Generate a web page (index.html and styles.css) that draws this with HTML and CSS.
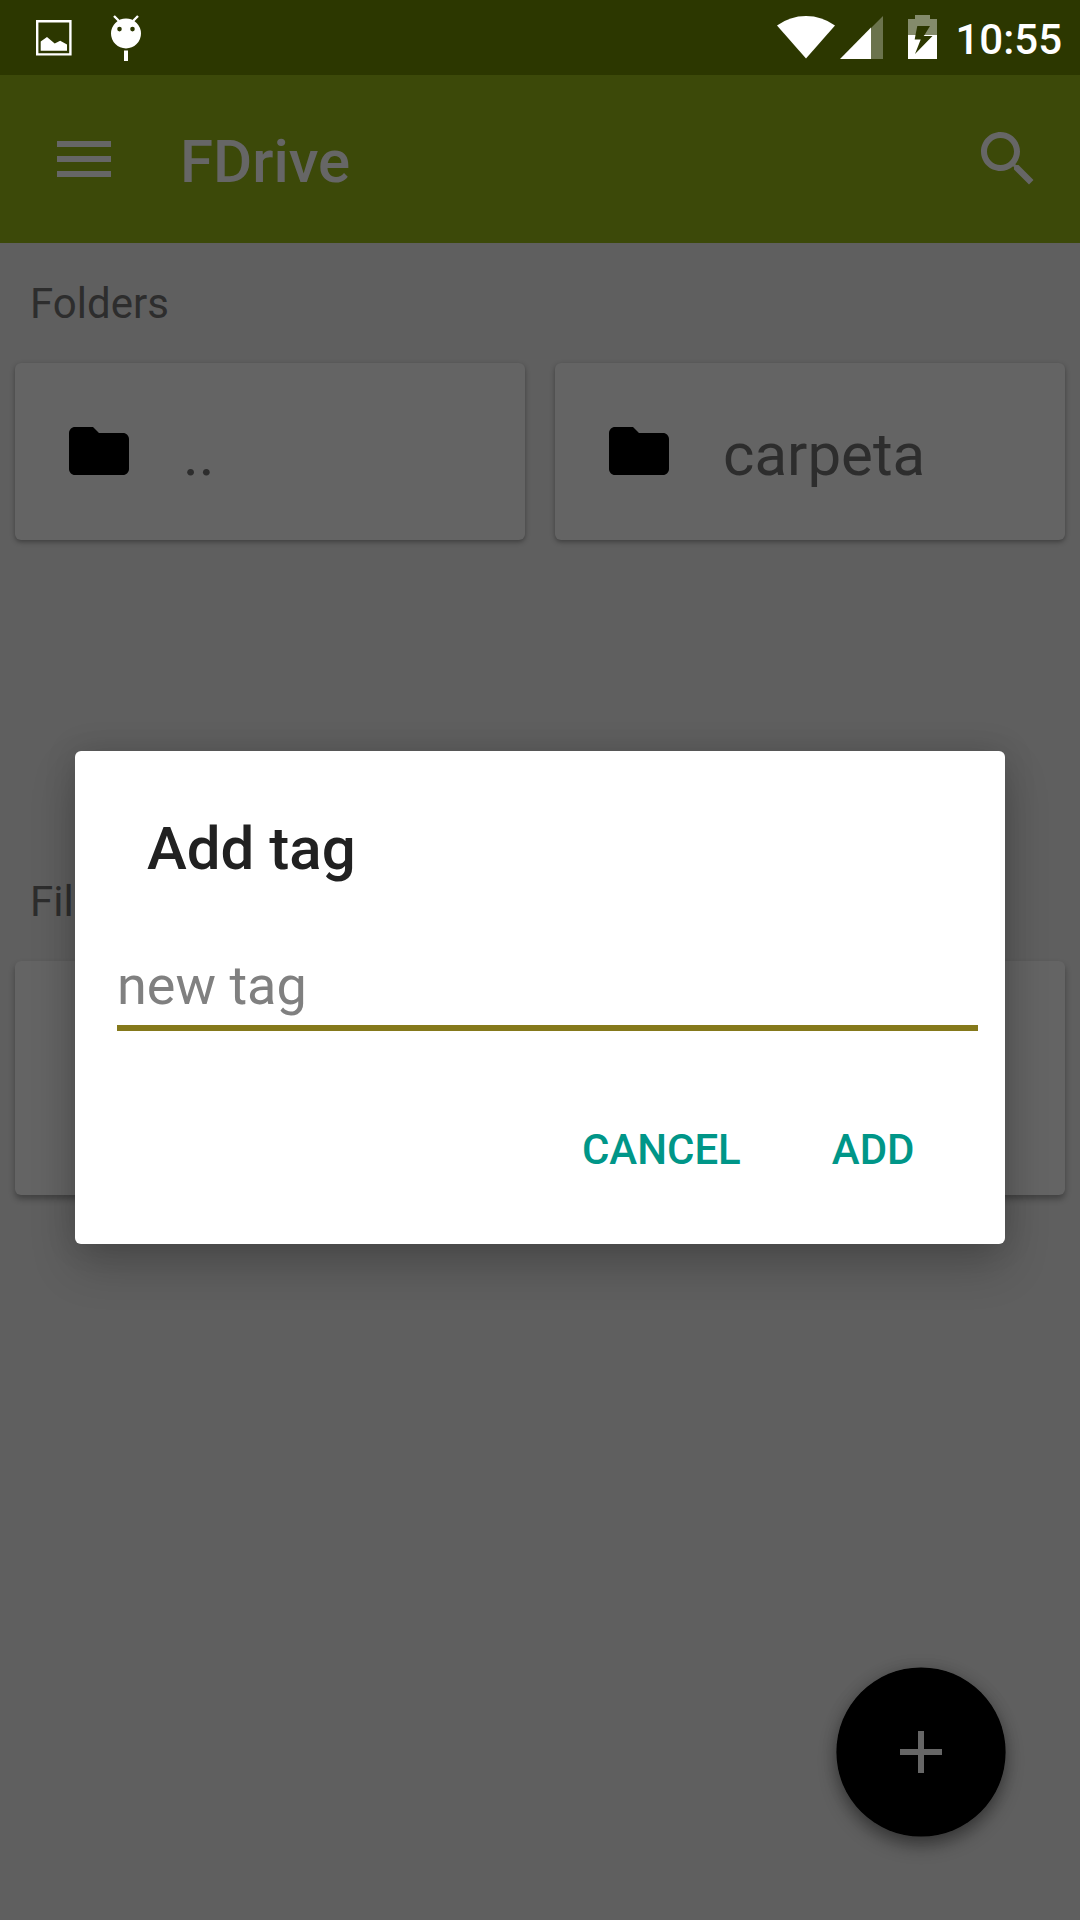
FILE: index.html
```html
<!DOCTYPE html>
<html lang="en">
<head>
<meta charset="utf-8">
<title>FDrive</title>
<link rel="stylesheet" href="styles.css">
</head>
<body>
<div class="screen">
  <div class="status-bar">
    <div class="status-left">
      <svg class="icon-image" viewBox="0 0 36 36"><path d="M1.200 1.200h33.200v33.200H1.200z" fill="none" stroke="#fff" stroke-width="2.400"/><path d="M4.700 30.700V21.500L11 17l7.700 6.500 5.500-2.800 6.800 3.800v6.200z" fill="#fff"/></svg>
      <svg class="icon-droid" viewBox="0 0 30 46"><path fill="#fff" fill-rule="evenodd" d="M15 3.500a15 15 0 1 0 0 30a15 15 0 0 0 0-30zM8.500 11.800a2.300 2.300 0 1 1 0 4.600a2.300 2.300 0 0 1 0-4.600zM21.500 11.800a2.300 2.300 0 1 1 0 4.600a2.300 2.300 0 0 1 0-4.600z"/><path d="M3 1l5 5M27 1l-5 5" stroke="#fff" stroke-width="2.400"/><path d="M13 35.500h4V46h-4z" fill="#fff"/></svg>
    </div>
    <div class="status-right">
      <svg class="icon-wifi" viewBox="0 0 58 43"><path fill="#fff" d="M0 9.500Q13 0 29 0T58 9.500L29 42.500z"/></svg>
      <svg class="icon-cell" viewBox="0 0 43 43"><path fill="#fff" fill-opacity=".3" d="M43 0v43H31V12z"/><path fill="#fff" d="M31 11.500V43H0z"/></svg>
      <svg class="icon-battery" viewBox="0 0 29 44"><path fill="#fff" fill-opacity=".42" d="M7 0h15v4h7v16H16.500L22 11H9.300L7.500 20H0V4h7z"/><path fill="#fff" fill-rule="evenodd" d="M0 20h7.500l-.8 4.500h6L7 39l17.500-18H15.700l.8-1H29v24H0z"/></svg>
      <span class="clock">10:55</span>
    </div>
  </div>
  <header class="app-bar">
    <svg class="icon-menu" viewBox="0 0 24 24"><path d="M3 18h18v-2H3v2zm0-5h18v-2H3v2zm0-7v2h18V6H3z"/></svg>
    <h1 class="app-title">FDrive</h1>
    <svg class="icon-search" viewBox="0 0 24 24"><path d="M15.500 14h-.79l-.28-.27C15.410 12.590 16 11.110 16 9.500 16 5.910 13.090 3 9.500 3S3 5.910 3 9.500 5.910 16 9.500 16c1.610 0 3.090-.59 4.230-1.570l.27.28v.79l5 4.990L20.490 19l-4.990-5zm-6 0C7.010 14 5 11.990 5 9.500S7.010 5 9.500 5 14 7.010 14 9.500 11.990 14 9.500 14z"/></svg>
  </header>
  <main class="content">
    <section class="section section-folders">
      <h2 class="section-title">Folders</h2>
      <div class="grid">
        <div class="card folder">
          <svg class="icon-folder" viewBox="0 0 24 24"><path d="M10 4H4c-1.100 0-1.990.9-1.990 2L2 18c0 1.100.9 2 2 2h16c1.100 0 2-.9 2-2V8c0-1.100-.9-2-2-2h-8l-2-2z"/></svg>
          <span class="folder-name">..</span>
        </div>
        <div class="card folder">
          <svg class="icon-folder" viewBox="0 0 24 24"><path d="M10 4H4c-1.100 0-1.990.9-1.990 2L2 18c0 1.100.9 2 2 2h16c1.100 0 2-.9 2-2V8c0-1.100-.9-2-2-2h-8l-2-2z"/></svg>
          <span class="folder-name">carpeta</span>
        </div>
      </div>
    </section>
    <section class="section">
      <h2 class="section-title">Files</h2>
      <div class="grid">
        <div class="card file"></div>
        <div class="card file"></div>
      </div>
    </section>
  </main>
  <div class="fab"><svg class="icon-add" viewBox="0 0 24 24"><path d="M19 13h-6v6h-2v-6H5v-2h6V5h2v6h6v2z"/></svg></div>
  <div class="dialog">
    <h2 class="dialog-title">Add tag</h2>
    <div class="field">new tag</div>
    <div class="actions">
      <span class="action">CANCEL</span>
      <span class="action">ADD</span>
    </div>
  </div>
</div>
</body>
</html>
```

FILE: styles.css
```css
* { box-sizing: border-box; }
body { margin: 0; font-family: Roboto, "Liberation Sans", sans-serif; }
h1, h2 { margin: 0; }
svg { display: block; flex: none; }

.screen {
  position: relative;
  width: 1080px;
  height: 1920px;
  overflow: hidden;
  background: #5f5f5f;
}

.status-bar {
  display: flex;
  justify-content: space-between;
  height: 75px;
  padding: 0 18px 0 36px;
  background: #2c3700;
}
.status-left, .status-right { display: flex; align-items: flex-start; }
.status-left { gap: 39px; }
.icon-image { width: 36px; height: 36px; margin-top: 20px; }
.icon-droid { width: 30px; height: 46px; margin-top: 15px; }
.icon-wifi { width: 58px; height: 43px; margin: 16px 5px 0 0; }
.icon-cell { width: 43px; height: 43px; margin: 16px 25px 0 0; }
.icon-battery { width: 29px; height: 44px; margin: 15px 18px 0 0; }
.clock { margin-top: 15px; font-size: 42px; line-height: 50px; font-weight: 500; color: #fff; }

.app-bar {
  display: flex;
  align-items: center;
  height: 168px;
  padding: 0 36px 0 48px;
  background: #3c4909;
}
.app-bar svg { width: 72px; height: 72px; fill: #666; }
.app-title {
  flex: 1;
  margin: 6px 0 0 60px;
  font-size: 60px;
  line-height: 70px;
  font-weight: 500;
  color: #666;
}

.content { padding: 0 15px; }
.section { padding-top: 30px; }
.section-folders { height: 598px; }
.section-title {
  height: 90px;
  padding: 6px 15px 0;
  font-size: 42px;
  line-height: 50px;
  font-weight: 400;
  color: #2d2d2d;
}
.grid { display: grid; grid-template-columns: 1fr 1fr; gap: 30px; }
.card {
  border-radius: 6px;
  background: #646464;
  box-shadow: 0 2px 5px rgba(0, 0, 0, .35);
}
.folder {
  display: flex;
  align-items: center;
  gap: 48px;
  height: 177px;
  padding: 0 48px;
}
.icon-folder { width: 72px; height: 72px; margin-bottom: 1px; }
.folder-name { padding-top: 6px; font-size: 60px; line-height: 70px; color: #2d2d2d; }
.file { height: 234px; box-shadow: 0 4px 6px rgba(0, 0, 0, .32); }

.fab {
  position: absolute;
  left: 837px;
  top: 1668px;
  display: flex;
  align-items: center;
  justify-content: center;
  width: 168px;
  height: 168px;
  border-radius: 50%;
  background: #000;
  box-shadow: 0 0 0 .6px #000, 0 9px 18px rgba(0, 0, 0, .4), 0 0 16px rgba(0, 0, 0, .15);
}
.icon-add { width: 72px; height: 72px; fill: #666; }

.dialog {
  position: absolute;
  left: 75px;
  top: 751px;
  width: 930px;
  height: 493px;
  padding: 63px 27px 0 42px;
  border-radius: 6px;
  background: #fff;
  box-shadow: 0 22px 46px rgba(0, 0, 0, .2), 0 0 32px rgba(0, 0, 0, .13);
}
.dialog-title {
  padding-left: 30px;
  font-size: 60px;
  line-height: 70px;
  font-weight: 500;
  color: #212121;
}
.field {
  height: 81px;
  margin-top: 66px;
  border-bottom: 6px solid #85791b;
  font-size: 54px;
  line-height: 72px;
  color: #808080;
}
.actions {
  display: flex;
  justify-content: flex-end;
  gap: 91px;
  margin-top: 94px;
  padding-right: 63.500px;
}
.action { font-size: 42px; line-height: 50px; font-weight: 500; color: #009688; }
```
